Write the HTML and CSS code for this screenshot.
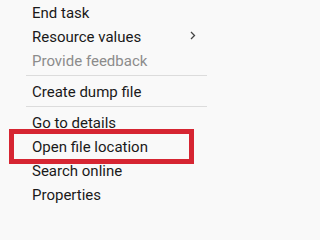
FILE: index.html
```html
<!DOCTYPE html>
<html>
<head>
<meta charset="utf-8">
<link rel="stylesheet" href="styles.css">
</head>
<body>
<div class="menu">
  <div class="item">End task</div>
  <div class="item has-sub">Resource values
    <svg class="chev" width="6" height="9" viewBox="0 0 6 9"><path d="M1 1 L4.5 4.5 L1 8" fill="none" stroke="#444" stroke-width="1.3"/></svg>
  </div>
  <div class="item disabled">Provide feedback</div>
  <div class="sep"></div>
  <div class="item">Create dump file</div>
  <div class="sep"></div>
  <div class="item">Go to details</div>
  <div class="item highlighted">Open file location<span class="mark"></span></div>
  <div class="item">Search online</div>
  <div class="item">Properties</div>
</div>
</body>
</html>
```
FILE: styles.css
```css
html, body {
  margin: 0;
  padding: 0;
  background: #f9f9f9;
}
.menu {
  width: 207px;
  font-family: Roboto, "Noto Sans", sans-serif;
  font-size: 15px;
  color: #1a1a1a;
}
.item {
  position: relative;
  height: 22px;
  padding-top: 2px;
  line-height: 22px;
  padding-left: 32px;
  white-space: nowrap;
}
.disabled {
  color: #8c8c8c;
}
.sep {
  height: 1px;
  background: #dcdcdc;
  margin: 3px 0 3px 26px;
}
.chev {
  position: absolute;
  left: 190px;
  top: 7px;
}
.mark {
  position: absolute;
  left: 9px;
  top: -5px;
  width: 185px;
  height: 35px;
  box-sizing: border-box;
  border: 5px solid #d62532;
}
```
